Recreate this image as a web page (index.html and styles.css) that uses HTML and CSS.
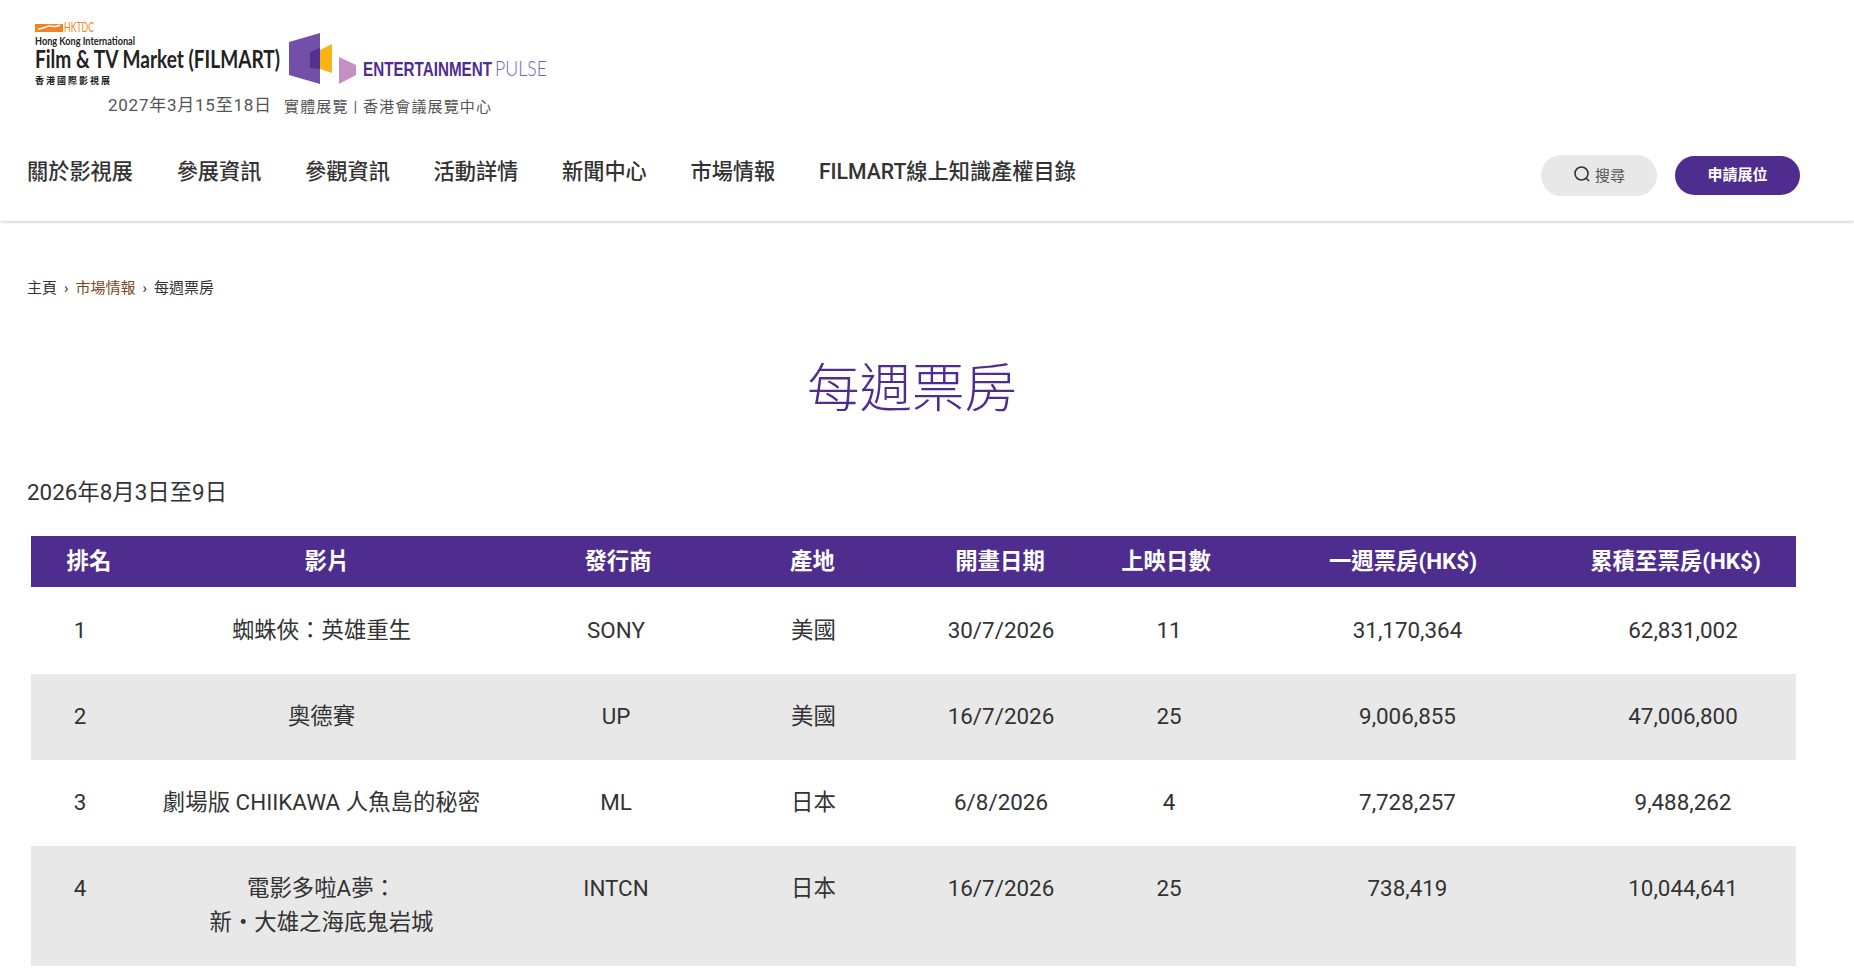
FILE: index.html
```html
<!DOCTYPE html>
<html lang="zh-Hant">
<head>
<title>每週票房</title>
<meta http-equiv="Content-Type" content="text/html; charset=utf-8"/>
<link rel="stylesheet" href="styles.css">
</head>
<body>

<div class="header">
  <svg class="logo" width="600" height="125" viewBox="0 0 600 125">
    <polygon class="hk-mark" points="35,24 63,24 63,32 35,32"/>
    <path class="hk-wave" d="M38,29 C44,29 46,26 50,26 C53,26 55,28 60,25" />
    <text class="hk-name" x="64" y="32" textLength="30" lengthAdjust="spacingAndGlyphs">HKTDC</text>
    <text class="logo-small" x="35" y="45" textLength="100" lengthAdjust="spacingAndGlyphs">Hong Kong International</text>
    <text class="logo-big" x="35" y="68" textLength="245" lengthAdjust="spacingAndGlyphs">Film &amp; TV Market (FILMART)</text>
    <text class="logo-cjk" x="35" y="84" textLength="75" lengthAdjust="spacing">香港國際影視展</text>
    <polygon class="p1" points="289,42 320,33 320,84 289,75"/>
    <polygon class="p2" points="320,50 332,44 332,73 320,69"/>
    <polygon class="p3" points="310,52 320,48 320,69 310,68"/>
    <polygon class="p4" points="339,57 356,65 356,75 339,84"/>
    <text class="ent" x="363" y="76" textLength="129" lengthAdjust="spacingAndGlyphs">ENTERTAINMENT</text>
    <text class="pulse" x="495" y="76" textLength="52" lengthAdjust="spacingAndGlyphs">PULSE</text>
    <text class="logo-date" x="108" y="111" textLength="163" lengthAdjust="spacing">2027年3月15至18日</text>
    <text class="logo-place" x="284" y="112" textLength="207" lengthAdjust="spacing">實體展覽 | 香港會議展覽中心</text>
  </svg>
  <div class="navrow">
    <div class="nav">
      <a>關於影視展</a>
      <a>參展資訊</a>
      <a>參觀資訊</a>
      <a>活動詳情</a>
      <a>新聞中心</a>
      <a>市場情報</a>
      <a>FILMART線上知識產權目錄</a>
    </div>
    <div class="tools">
      <div class="search">
        <svg width="18" height="18" viewBox="0 0 18 18">
          <circle cx="8.5" cy="8.5" r="6.5"/>
          <line x1="13.2" y1="13.2" x2="16" y2="16"/>
        </svg>
        <span>搜尋</span>
      </div>
      <div class="apply">申請展位</div>
    </div>
  </div>
</div>

<div class="cont">
  <div class="crumb">
    <span>主頁</span><i>›</i><a>市場情報</a><i>›</i><span>每週票房</span>
  </div>
  <h1>每週票房</h1>
  <p class="period">2026年8月3日至9日</p>
  <table>
    <colgroup>
      <col class="c1"><col class="c2"><col class="c3"><col class="c4">
      <col class="c5"><col class="c6"><col class="c7"><col class="c8">
    </colgroup>
    <tr>
      <th>排名</th><th>影片</th><th>發行商</th><th>產地</th>
      <th>開畫日期</th><th>上映日數</th><th>一週票房(HK$)</th><th>累積至票房(HK$)</th>
    </tr>
    <tr>
      <td>1</td><td>蜘蛛俠：英雄重生</td><td>SONY</td><td>美國</td>
      <td>30/7/2026</td><td>11</td><td>31,170,364</td><td>62,831,002</td>
    </tr>
    <tr>
      <td>2</td><td>奧德賽</td><td>UP</td><td>美國</td>
      <td>16/7/2026</td><td>25</td><td>9,006,855</td><td>47,006,800</td>
    </tr>
    <tr>
      <td>3</td><td>劇場版 CHIIKAWA 人魚島的秘密</td><td>ML</td><td>日本</td>
      <td>6/8/2026</td><td>4</td><td>7,728,257</td><td>9,488,262</td>
    </tr>
    <tr>
      <td>4</td><td>電影多啦A夢：<br>新・大雄之海底鬼岩城</td><td>INTCN</td><td>日本</td>
      <td>16/7/2026</td><td>25</td><td>738,419</td><td>10,044,641</td>
    </tr>
  </table>
</div>

</body>
</html>
```

FILE: styles.css
```css
body {
    margin:0;
    background:#fff;
    color:#333;
    font-family:Roboto, "Noto Sans CJK TC", sans-serif;
}

.header {
    height:221px;
    box-shadow:0 1px 3px rgba(0,0,0,0.22);
}
.logo {
    display:block;
}
.logo text {
    font-family:Lato, "Noto Sans CJK TC", sans-serif;
}
.hk-mark { fill:#f58220; }
.hk-wave { fill:none; stroke:#fff; stroke-width:1.5; }
.logo .hk-name { font-size:13px; fill:#f58220; }
.logo .logo-small { font-size:11px; font-weight:bold; fill:#222; }
.logo .logo-big { font-size:25px; font-weight:bold; fill:#222; }
.logo .logo-cjk { font-size:9px; font-weight:bold; fill:#222; font-family:"Noto Sans CJK TC", sans-serif; }
.p1 { fill:#7350a8; }
.p2 { fill:#fbb415; }
.p3 { fill:#54308f; }
.p4 { fill:#c68fc4; }
.logo .ent { font-family:"Liberation Sans", sans-serif; font-size:20.5px; font-weight:bold; fill:#4f2d8f; }
.logo .pulse { font-size:21px; font-weight:300; fill:#7a5fb0; }
.logo .logo-date, .logo .logo-place {
    font-family:Roboto, "Noto Sans CJK TC", sans-serif;
    fill:#555;
}
.logo .logo-date { font-size:17px; }
.logo .logo-place { font-size:15px; }

.navrow {
    display:flex;
    justify-content:space-between;
    padding:0 54px 0 27px;
}
.nav {
    display:flex;
    gap:43.7px;
    padding-top:34px;
    font-size:21.2px;
    font-weight:500;
    line-height:26px;
}
.tools {
    display:flex;
    align-items:center;
    gap:18px;
    height:41px;
    padding-top:30px;
}
.search {
    display:flex;
    align-items:center;
    justify-content:center;
    gap:4px;
    width:116px;
    height:41px;
    padding-bottom:3px;
    box-sizing:border-box;
    border-radius:21px;
    background:#e8e8e8;
    font-size:15px;
    color:#555;
}
.search svg {
    fill:none;
    stroke:#333;
    stroke-width:1.6;
}
.apply {
    width:125px;
    height:39px;
    line-height:38px;
    border-radius:20px;
    background:#4f2d8f;
    color:#fff;
    font-size:15px;
    font-weight:bold;
    text-align:center;
}

.cont {
    width:1770px;
    margin-left:27px;
}
.crumb {
    padding-top:57px;
    font-size:15px;
    line-height:20px;
}
.crumb i {
    margin:0 7px;
    font-style:normal;
}
.crumb a {
    color:#7a4a1e;
}
h1 {
    margin:59px 0 0;
    font-size:52.5px;
    font-weight:300;
    line-height:64px;
    color:#4f2d8f;
    text-align:center;
}
.period {
    margin:55px 0 0;
    font-size:22.4px;
    line-height:32px;
}

table {
    width:1765px;
    margin:28px 0 0 4px;
    table-layout:fixed;
    border-collapse:collapse;
    font-size:22.4px;
    line-height:34px;
    text-align:center;
}
.c1 { width:98px; }
.c2 { width:385px; }
.c3 { width:204px; }
.c4 { width:191px; }
.c5 { width:184px; }
.c6 { width:152px; }
.c7 { width:325px; }
.c8 { width:226px; }
th {
    padding:8px 0 9px;
    background:#4f2d8f;
    color:#fff;
    font-weight:bold;
}
th:nth-child(1) { padding-left:18px; }
th:nth-child(2) { padding-left:11px; }
th:nth-child(3) { padding-left:4px; }
th:nth-child(4) { padding-right:2px; }
th:nth-child(5) { padding-right:2px; }
th:nth-child(6) { padding-right:6px; }
th:nth-child(7) { padding-right:9px; }
th:nth-child(8) { padding-right:15px; }
td {
    padding:25px 0 27px;
    vertical-align:top;
}
tr:nth-child(2) td {
    padding:26px 0 27px;
}
tr:nth-child(odd) td {
    background:#e8e8e8;
}
```
